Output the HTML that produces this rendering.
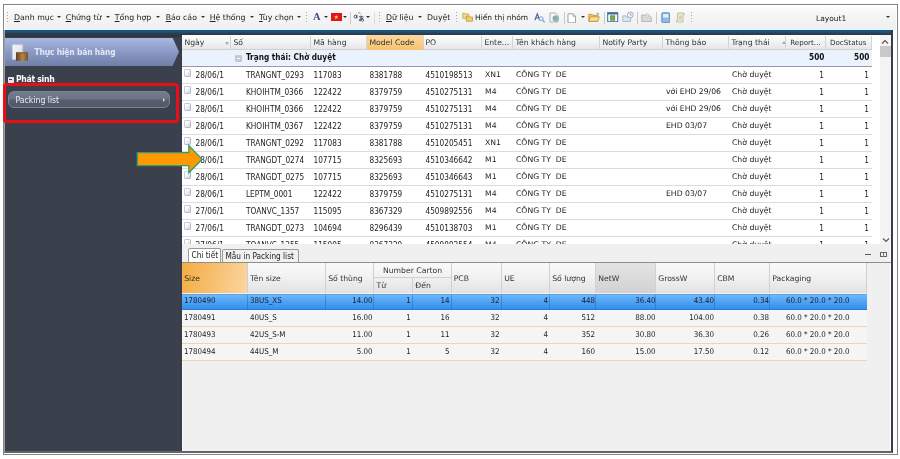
<!DOCTYPE html>
<html lang="vi">
<head>
<meta charset="utf-8">
<title>Packing list</title>
<style>
html,body{margin:0;padding:0;background:#fff;}
body{width:900px;height:459px;position:relative;overflow:hidden;font-family:"DejaVu Sans Condensed","DejaVu Sans","Liberation Sans",sans-serif;font-size:8.2px;color:#2a2a2a;}
div{position:absolute;box-sizing:border-box;}
#wrap{left:0;top:0;width:900px;height:459px;will-change:transform;}
.t{white-space:nowrap;line-height:10px;height:10px;font-size:8.2px;color:#222;}
.t.r{text-align:right;}
.t.b{font-weight:bold;color:#111;}
.t.h,.t.w{font-family:"DejaVu Sans","Liberation Sans",sans-serif;font-size:7.7px;}
.t.h{color:#333;}
.t.sel{color:#161c33;}
#grid2 .t{font-size:7.9px;}
#grid2 .t.h{font-size:7.7px;}
/* frame */
#frame{left:3px;top:4px;width:895px;height:451px;border:1.5px solid #848484;background:#fff;}
#toolbar{left:5px;top:6px;width:891px;height:23.5px;background:linear-gradient(#fdfdfd,#f5f5f5 40%,#f1f1f1 86%,#e3f4fa 96%);}
#band{left:5px;top:29.5px;width:887px;height:8.5px;background:linear-gradient(#1b5884 0,#1c4f76 28%,#2b3e52 42%,#2f3742 65%,#2f3540 100%);}
#main{left:4px;top:30px;width:889px;height:423px;border-left:1px solid #9aa0aa;border-right:2px solid #3a3c4c;border-bottom:2px solid #62646e;}
#side{left:5px;top:37px;width:177px;height:414px;background:#3a404c;}
#content{left:182px;top:35px;width:708.300px;height:416px;background:#f0f0f0;}
#gridbg{left:182px;top:35px;width:708.300px;height:209.3px;background:#fff;}
/* toolbar */
.mi{font-family:"DejaVu Sans","Liberation Sans",sans-serif;font-size:7.8px;color:#222;top:13.2px;line-height:10px;white-space:nowrap;}
.mi u{text-decoration:underline;}
.dd{width:0;height:0;border-left:2px solid transparent;border-right:2px solid transparent;border-top:2.5px solid #333;top:16px;}
.grip{width:1px;height:12px;top:12px;background:repeating-linear-gradient(#aaa 0,#aaa 1px,transparent 1px,transparent 3px);}
.tsep{width:1px;height:12px;top:12px;background:#c9c9c9;}
/* sidebar */
#shead{left:5px;top:37.5px;width:174px;height:28.5px;background:linear-gradient(#a9b9e1,#8c9cc8 45%,#6f7fa7);clip-path:polygon(0 0,167.500px 0,174px 50%,167.500px 100%,0 100%);}
#pbtn{left:7.8px;top:91.2px;width:162px;height:16.8px;border-radius:6px;border:1px solid #7d8494;background:linear-gradient(#737b8e,#6a7286 49%,#565e6f 51%,#50586a);}
#redbox{left:2.5px;top:82.7px;width:176.2px;height:39.9px;border:3.5px solid #ea0f17;border-radius:3.5px;}
/* grid 1 */
.gh{background:linear-gradient(#fdfdfd,#f3f3f3 50%,#e6e6e6);border-bottom:1px solid #d0d0d0;}
.ghsel{background:linear-gradient(#fbd9a0,#f8c26f);}
.vsep{width:1px;background:#d4d4d4;}
.grp{background:#eaf3fd;}
.hline{height:1px;background:#dcdcdc;}
.hline.dark{background:#9a9a9a;}
.cb{width:7px;height:8px;border:1px solid #b3b8c8;border-top-color:#c6cad6;border-left-color:#c6cad6;border-radius:1.8px;background:linear-gradient(135deg,#fff 25%,#d0d4e1);}
.minus{width:6.5px;height:6.5px;border-radius:1.2px;background:#c6cad0;}
.minus:after{content:"";position:absolute;left:1.5px;top:2.6px;width:3.5px;height:1.2px;background:#fff;}
.sortd{width:0;height:0;border-left:2.5px solid transparent;border-right:2.5px solid transparent;border-top:3px solid #aaa;}
.sortu{width:0;height:0;border-left:2.5px solid transparent;border-right:2.5px solid transparent;border-bottom:3px solid #aaa;}
/* scrollbar */
#sb{left:880px;top:35px;width:10.5px;height:209.3px;background:#f4f4f4;}
#sbthumb{left:880px;top:46.3px;width:10.5px;height:10.3px;background:#c9c9c9;}
/* tabs */
.tab{border:1px solid #9a9a9a;border-bottom:none;border-radius:2px 2px 0 0;background:#f0f0f0;}
.tab.act{background:#fff;}
/* grid 2 */
.bh{background:linear-gradient(#fafafa,#f1f1f1 50%,#e2e2e2);}
.bhsel{background:linear-gradient(102deg,#f6ad42,#f7c070 50%,#fad7a2);}
.bhnet{background:linear-gradient(#e4e4e4,#d2d2d2);}
.vsep2{width:1px;background:#d0d0d0;}
.hsep2{height:1px;background:#d0d0d0;}
.selrow{background:linear-gradient(#6fb7fa,#50a4f4 45%,#3390ec);border-top:1px solid #5aa2e6;border-bottom:1px solid #2c7ad2;}
.selsep{width:1px;background:rgba(35,95,175,0.45);}
.brow{background:#f5f5f5;border-bottom:1.1px solid #f4d3a6;}
</style>
</head>
<body>
<div id="wrap">
<div id="frame"></div>
<div id="toolbar"></div>
<div id="band"></div>
<div id="side"></div>
<div id="content"></div>
<div style="left:180.200px;top:36px;width:1.800px;height:415px;background:#3b3b50"></div>
<div style="left:182px;top:244px;width:1.200px;height:207px;background:#fafafa"></div>
<div id="gridbg"></div>
<div id="main"></div>

<!-- toolbar items -->
<div class="grip" style="left:7px"></div>
<div class="mi" style="left:14px"><u>D</u>anh mục</div><div class="dd" style="left:57px"></div>
<div class="mi" style="left:65.700px"><u>C</u>hứng từ</div><div class="dd" style="left:105.700px"></div>
<div class="mi" style="left:114.700px"><u>T</u>ổng hợp</div><div class="dd" style="left:156.300px"></div>
<div class="mi" style="left:165.700px"><u>B</u>áo cáo</div><div class="dd" style="left:201px"></div>
<div class="mi" style="left:209.700px"><u>H</u>ệ thống</div><div class="dd" style="left:249.700px"></div>
<div class="mi" style="left:259px"><u>T</u>ùy chọn</div><div class="dd" style="left:297px"></div>
<div class="grip" style="left:306px"></div>
<div class="mi" style="left:313px;font-family:'Liberation Serif',serif;font-weight:bold;font-size:10.5px;color:#3a4a82;top:12.2px">A</div><div class="dd" style="left:324px"></div>
<div style="left:331px;top:13.3px;width:10.500px;height:7.500px;background:#e0161f"></div>
<div class="mi" style="left:333.800px;top:12.1px;font-size:5.5px;color:#ffe44a">★</div>
<div class="dd" style="left:342.500px"></div>
<div class="tsep" style="left:350px"></div>
<svg style="position:absolute;left:353px;top:11px" width="12" height="12" viewBox="0 0 12 12"><path d="M5 2.300Q6.500 0.800 7.600 2.600" fill="none" stroke="#4a8fd8" stroke-width="0.9"/><ellipse cx="2.500" cy="5.600" rx="1.300" ry="1.500" fill="none" stroke="#34405a" stroke-width="0.9"/><path d="M3.900 3.900V7.300" stroke="#34405a" stroke-width="0.9"/><path d="M6 5.800H10.500M8 4.600V10.200M9.800 6.800Q9.600 9.400 6.800 10Q5.200 9.400 7.400 7.800Q10.400 6.800 10.600 9.200Q10.400 10.400 9.400 10.600" fill="none" stroke="#34405a" stroke-width="0.85"/></svg>
<div class="dd" style="left:365.500px"></div>
<div class="tsep" style="left:373.500px;background:#dcdcdc"></div><div class="grip" style="left:378.500px"></div>
<div class="mi" style="left:386px"><u>D</u>ữ liệu</div><div class="dd" style="left:418px"></div>
<div class="mi" style="left:427px">Duyệt</div>
<div class="grip" style="left:456px"></div>
<!-- icons -->
<svg style="position:absolute;left:461.500px;top:11.5px" width="11.5" height="10" viewBox="0 0 11.5 10"><path d="M0.800 1.300h2.400l0.700 0.800h2.800v4.200h-5.900z" fill="#f3d987" stroke="#b99a45" stroke-width="0.7"/><path d="M4.300 4.200h2.400l0.700 0.800h3.200v4.200h-6.300z" fill="#f0cf6a" stroke="#b08d35" stroke-width="0.7"/></svg>
<div class="mi" style="left:475px;font-size:7.5px">Hiển thị nhóm</div>
<svg style="position:absolute;left:533.500px;top:11.5px" width="12" height="12" viewBox="0 0 12 12"><path d="M0.800 8.200L3.300 1.800L5.800 8.200M1.700 6h3.200" fill="none" stroke="#3f5fa0" stroke-width="1.05"/><circle cx="7.200" cy="6.600" r="1.900" fill="#eaf2fb" stroke="#6f95cc" stroke-width="0.9"/><line x1="8.600" y1="8.100" x2="10.600" y2="10.300" stroke="#6f95cc" stroke-width="1.2"/></svg>
<svg style="position:absolute;left:549px;top:11.5px" width="11" height="11" viewBox="0 0 11 11"><path d="M1 1h5.500l2.500 2.500v6.500h-8z" fill="#f7f8fa" stroke="#9aa0aa" stroke-width="0.8"/><circle cx="6.600" cy="6.400" r="2.700" fill="#9fc0d8" stroke="#6d8aa5" stroke-width="0.7"/><path d="M5.200 5.200q1.400-1 2.600 0.300q-0.300 1.600-1.600 2.300q-1.300-1-1-2.600z" fill="#6fae5c"/></svg>
<div class="tsep" style="left:563.500px"></div>
<svg style="position:absolute;left:567.300px;top:12.5px" width="9.500" height="10.500" viewBox="0 0 9.500 10.500"><path d="M1 0.800h5l2.500 2.500v6.500h-7.500z" fill="#fff" stroke="#8d939e" stroke-width="0.85"/><path d="M6 0.800v2.500h2.500" fill="none" stroke="#8d939e" stroke-width="0.7"/></svg>
<div class="dd" style="left:581.300px"></div>
<svg style="position:absolute;left:588px;top:11.5px" width="12" height="10.500" viewBox="0 0 12 10.500"><path d="M0.800 2.300h3.400l0.900 1h4.700v6h-9z" fill="#eec65a" stroke="#b18a2a" stroke-width="0.7"/><path d="M2.300 4.800h9l-1.600 4.500h-8.900z" fill="#f9e08e" stroke="#b18a2a" stroke-width="0.7"/><path d="M8.500 1.200l2 0.400-0.600 1.800" fill="none" stroke="#5f86c4" stroke-width="0.8"/></svg>
<div class="tsep" style="left:604px"></div>
<svg style="position:absolute;left:607px;top:11.7px" width="11.500" height="10.500" viewBox="0 0 11.500 10.500"><rect x="0.700" y="0.700" width="10" height="9" fill="#fbfcfd" stroke="#3f6da3" stroke-width="1"/><rect x="0.700" y="0.700" width="10" height="1.800" fill="#3f6da3"/><rect x="3.600" y="3.800" width="4.200" height="4.400" fill="#74b04c" stroke="#467a2c" stroke-width="0.6"/></svg>
<svg style="position:absolute;left:621.800px;top:11.2px" width="12.500" height="11.500" viewBox="0 0 12.500 11.500"><path d="M0.800 4.800h3l0.800 0.900h4v4.800h-7.800z" fill="#d9e4f0" stroke="#94a8c0" stroke-width="0.7"/><circle cx="8.300" cy="3.900" r="2.900" fill="#f6f9fc" stroke="#8a9bb2" stroke-width="0.8"/><path d="M8.300 2.200v1.800h1.500" fill="none" stroke="#6d7f98" stroke-width="0.7"/></svg>
<div class="tsep" style="left:637px"></div>
<svg style="position:absolute;left:640.800px;top:12px" width="11.500" height="10.500" viewBox="0 0 11.500 10.500"><path d="M0.800 3h6.800l2.700 2.400v4.100h-9.500z" fill="#dadada" stroke="#a9a9a9" stroke-width="0.8"/><path d="M5.500 1.200l2.700 2.200-2 2.400" fill="#ececec" stroke="#b4b4b4" stroke-width="0.7"/></svg>
<div class="tsep" style="left:656px"></div>
<svg style="position:absolute;left:660.500px;top:11.8px" width="9.500" height="11.500" viewBox="0 0 9.500 11.500"><rect x="0.800" y="0.800" width="7.900" height="9.900" rx="0.900" fill="#8fb9e4" stroke="#5b86b8" stroke-width="0.9"/><rect x="2.100" y="2.100" width="5.300" height="3.400" fill="#e4f0fb"/></svg>
<svg style="position:absolute;left:675px;top:11.800px" width="10.500" height="11" viewBox="0 0 10.500 11"><path d="M2.600 1h6.300q0.900 0.900 0 1.800h-0.900v7.200h-6.300q-0.900-0.900 0-1.800h0.900z" fill="#efe9d2" stroke="#b3aa8c" stroke-width="0.7"/><path d="M4.200 3.500h2.300v4.200h-2.300z" fill="#d8cfa8"/></svg>
<div class="grip" style="left:691px"></div>
<div class="mi" style="left:816px;font-size:7.5px;top:13.6px">Layout1</div>
<div class="dd" style="left:886px"></div>

<!-- sidebar -->
<div id="shead"></div>
<svg style="position:absolute;left:10px;top:42px" width="20" height="22" viewBox="0 0 20 22"><defs><linearGradient id="pg" x1="0" y1="0" x2="1" y2="1"><stop offset="0" stop-color="#ffffff"/><stop offset="1" stop-color="#cfd3de"/></linearGradient><linearGradient id="bg" x1="0" y1="0" x2="1" y2="0"><stop offset="0" stop-color="#5e3f1a"/><stop offset="0.55" stop-color="#b5854a"/><stop offset="1" stop-color="#7a5226"/></linearGradient></defs><path d="M2.300 2.700h10.400v14.800h-10.400z" fill="url(#pg)" stroke="#c3c7d3" stroke-width="1"/><path d="M4 4.500h7v2.500h-7z" fill="#e9ebf1"/><path d="M6 10.200h12v8.600h-12z" fill="url(#bg)"/><path d="M6 10.200h12v1.500h-12z" fill="#8a6230" opacity="0.7"/></svg>
<div class="t" style="left:34.500px;top:47px;font-weight:bold;font-size:8.4px;letter-spacing:-0.15px;color:#e3e7f2">Thực hiện bán hàng</div>
<div style="left:8px;top:77px;width:5.500px;height:5.500px;background:#e4e6ec;border-radius:0.8px"></div><div style="left:9.200px;top:79.2px;width:3.100px;height:1.1px;background:#3a404c"></div>
<div class="t" style="left:16px;top:73.9px;font-weight:bold;font-size:8.6px;letter-spacing:-0.3px;color:#fff">Phát sinh</div>
<div id="pbtn"></div>
<div class="t" style="left:15.600px;top:94.7px;color:#eceef3;font-size:8.6px">Packing list</div>
<div style="left:162.800px;top:97.5px;width:0;height:0;border-top:2px solid transparent;border-bottom:2px solid transparent;border-left:2.7px solid #f0d98c"></div>
<div id="redbox"></div>

<div id="grid1">
<div class="gh" style="left:182px;top:35px;width:690px;height:15px"></div>
<div class="ghsel" style="left:367px;top:35px;width:57px;height:15px"></div>
<div class="t h" style="left:184.4px;top:37.5px;">Ngày</div>
<div class="t h" style="left:233.4px;top:37.5px;">Số</div>
<div class="vsep" style="left:230px;top:36px;height:13px"></div>
<div class="t h" style="left:313.4px;top:37.5px;">Mã hàng</div>
<div class="vsep" style="left:310px;top:36px;height:13px"></div>
<div class="t h" style="left:369.4px;top:37.5px;">Model Code</div>
<div class="vsep" style="left:366px;top:36px;height:13px"></div>
<div class="t h" style="left:425.4px;top:37.5px;">PO</div>
<div class="vsep" style="left:422px;top:36px;height:13px"></div>
<div class="t h" style="left:484.4px;top:37.5px;">Ente...</div>
<div class="vsep" style="left:481px;top:36px;height:13px"></div>
<div class="t h" style="left:515.4px;top:37.5px;">Tên khách hàng</div>
<div class="vsep" style="left:512px;top:36px;height:13px"></div>
<div class="t h" style="left:602.4px;top:37.5px;">Notify Party</div>
<div class="vsep" style="left:599px;top:36px;height:13px"></div>
<div class="t h" style="left:665.4px;top:37.5px;">Thông báo</div>
<div class="vsep" style="left:662px;top:36px;height:13px"></div>
<div class="t h" style="left:731.4px;top:37.5px;">Trạng thái</div>
<div class="vsep" style="left:728px;top:36px;height:13px"></div>
<div class="t h" style="left:790.2px;top:37.5px;font-size:7.15px">Report...</div>
<div class="vsep" style="left:785px;top:36px;height:13px"></div>
<div class="t h" style="left:830px;top:37.5px;font-size:7.15px">DocStatus</div>
<div class="vsep" style="left:825px;top:36px;height:13px"></div>
<div class="vsep" style="left:871px;top:36px;height:13px"></div>
<div class="sortd" style="left:225px;top:42px"></div>
<div class="sortu" style="left:782px;top:41px"></div>
<div class="grp" style="left:182px;top:50px;width:690px;height:16px"></div>
<div class="minus" style="left:235px;top:55px"></div>
<div class="t b" style="left:246px;top:52px;">Trạng thái: Chờ duyệt</div>
<div class="t r b" style="left:724.5px;width:100px;top:52px;">500</div>
<div class="t r b" style="left:769.5px;width:100px;top:52px;">500</div>
<div class="hline dark" style="left:182px;top:66.2px;width:690px"></div>
<div class="cb" style="left:184.3px;top:69.20px"></div>
<div class="t " style="left:195.5px;top:70.0px;">28/06/1</div>
<div class="t " style="left:246px;top:70.0px;">TRANGNT_0293</div>
<div class="t " style="left:313.5px;top:70.0px;">117083</div>
<div class="t " style="left:369.5px;top:70.0px;">8381788</div>
<div class="t " style="left:425.5px;top:70.0px;">4510198513</div>
<div class="t w" style="left:485px;top:70.0px;">XN1</div>
<div class="t w" style="left:516px;top:70.0px;white-space:pre">CÔNG TY  DE</div>
<div class="t w" style="left:666px;top:70.0px;"></div>
<div class="t w" style="left:732px;top:70.0px;">Chờ duyệt</div>
<div class="t r " style="left:724px;width:100px;top:70.0px;">1</div>
<div class="t r " style="left:769px;width:100px;top:70.0px;">1</div>
<div class="hline" style="left:182px;top:83.26px;width:690px"></div>
<div class="cb" style="left:184.3px;top:86.16px"></div>
<div class="t " style="left:195.5px;top:86.96000000000001px;">28/06/1</div>
<div class="t " style="left:246px;top:86.96000000000001px;">KHOIHTM_0366</div>
<div class="t " style="left:313.5px;top:86.96000000000001px;">122422</div>
<div class="t " style="left:369.5px;top:86.96000000000001px;">8379759</div>
<div class="t " style="left:425.5px;top:86.96000000000001px;">4510275131</div>
<div class="t w" style="left:485px;top:86.96000000000001px;">M4</div>
<div class="t w" style="left:516px;top:86.96000000000001px;white-space:pre">CÔNG TY  DE</div>
<div class="t w" style="left:666px;top:86.96000000000001px;">với EHD 29/06</div>
<div class="t w" style="left:732px;top:86.96000000000001px;">Chờ duyệt</div>
<div class="t r " style="left:724px;width:100px;top:86.96000000000001px;">1</div>
<div class="t r " style="left:769px;width:100px;top:86.96000000000001px;">1</div>
<div class="hline" style="left:182px;top:100.22px;width:690px"></div>
<div class="cb" style="left:184.3px;top:103.12px"></div>
<div class="t " style="left:195.5px;top:103.92px;">28/06/1</div>
<div class="t " style="left:246px;top:103.92px;">KHOIHTM_0366</div>
<div class="t " style="left:313.5px;top:103.92px;">122422</div>
<div class="t " style="left:369.5px;top:103.92px;">8379759</div>
<div class="t " style="left:425.5px;top:103.92px;">4510275131</div>
<div class="t w" style="left:485px;top:103.92px;">M4</div>
<div class="t w" style="left:516px;top:103.92px;white-space:pre">CÔNG TY  DE</div>
<div class="t w" style="left:666px;top:103.92px;">với EHD 29/06</div>
<div class="t w" style="left:732px;top:103.92px;">Chờ duyệt</div>
<div class="t r " style="left:724px;width:100px;top:103.92px;">1</div>
<div class="t r " style="left:769px;width:100px;top:103.92px;">1</div>
<div class="hline" style="left:182px;top:117.18px;width:690px"></div>
<div class="cb" style="left:184.3px;top:120.08px"></div>
<div class="t " style="left:195.5px;top:120.88px;">28/06/1</div>
<div class="t " style="left:246px;top:120.88px;">KHOIHTM_0367</div>
<div class="t " style="left:313.5px;top:120.88px;">122422</div>
<div class="t " style="left:369.5px;top:120.88px;">8379759</div>
<div class="t " style="left:425.5px;top:120.88px;">4510275131</div>
<div class="t w" style="left:485px;top:120.88px;">M4</div>
<div class="t w" style="left:516px;top:120.88px;white-space:pre">CÔNG TY  DE</div>
<div class="t w" style="left:666px;top:120.88px;">EHD 03/07</div>
<div class="t w" style="left:732px;top:120.88px;">Chờ duyệt</div>
<div class="t r " style="left:724px;width:100px;top:120.88px;">1</div>
<div class="t r " style="left:769px;width:100px;top:120.88px;">1</div>
<div class="hline" style="left:182px;top:134.14px;width:690px"></div>
<div class="cb" style="left:184.3px;top:137.04px"></div>
<div class="t " style="left:195.5px;top:137.84px;">28/06/1</div>
<div class="t " style="left:246px;top:137.84px;">TRANGNT_0292</div>
<div class="t " style="left:313.5px;top:137.84px;">117083</div>
<div class="t " style="left:369.5px;top:137.84px;">8381788</div>
<div class="t " style="left:425.5px;top:137.84px;">4510205451</div>
<div class="t w" style="left:485px;top:137.84px;">XN1</div>
<div class="t w" style="left:516px;top:137.84px;white-space:pre">CÔNG TY  DE</div>
<div class="t w" style="left:666px;top:137.84px;"></div>
<div class="t w" style="left:732px;top:137.84px;">Chờ duyệt</div>
<div class="t r " style="left:724px;width:100px;top:137.84px;">1</div>
<div class="t r " style="left:769px;width:100px;top:137.84px;">1</div>
<div class="hline" style="left:182px;top:151.10px;width:690px"></div>
<div class="cb" style="left:184.3px;top:154.00px"></div>
<div class="t " style="left:195.5px;top:154.8px;">28/06/1</div>
<div class="t " style="left:246px;top:154.8px;">TRANGDT_0274</div>
<div class="t " style="left:313.5px;top:154.8px;">107715</div>
<div class="t " style="left:369.5px;top:154.8px;">8325693</div>
<div class="t " style="left:425.5px;top:154.8px;">4510346642</div>
<div class="t w" style="left:485px;top:154.8px;">M1</div>
<div class="t w" style="left:516px;top:154.8px;white-space:pre">CÔNG TY  DE</div>
<div class="t w" style="left:666px;top:154.8px;"></div>
<div class="t w" style="left:732px;top:154.8px;">Chờ duyệt</div>
<div class="t r " style="left:724px;width:100px;top:154.8px;">1</div>
<div class="t r " style="left:769px;width:100px;top:154.8px;">1</div>
<div class="hline" style="left:182px;top:168.06px;width:690px"></div>
<div class="cb" style="left:184.3px;top:170.96px"></div>
<div class="t " style="left:195.5px;top:171.76000000000002px;">28/06/1</div>
<div class="t " style="left:246px;top:171.76000000000002px;">TRANGDT_0275</div>
<div class="t " style="left:313.5px;top:171.76000000000002px;">107715</div>
<div class="t " style="left:369.5px;top:171.76000000000002px;">8325693</div>
<div class="t " style="left:425.5px;top:171.76000000000002px;">4510346643</div>
<div class="t w" style="left:485px;top:171.76000000000002px;">M1</div>
<div class="t w" style="left:516px;top:171.76000000000002px;white-space:pre">CÔNG TY  DE</div>
<div class="t w" style="left:666px;top:171.76000000000002px;"></div>
<div class="t w" style="left:732px;top:171.76000000000002px;">Chờ duyệt</div>
<div class="t r " style="left:724px;width:100px;top:171.76000000000002px;">1</div>
<div class="t r " style="left:769px;width:100px;top:171.76000000000002px;">1</div>
<div class="hline" style="left:182px;top:185.02px;width:690px"></div>
<div class="cb" style="left:184.3px;top:187.92px"></div>
<div class="t " style="left:195.5px;top:188.72px;">28/06/1</div>
<div class="t " style="left:246px;top:188.72px;">LEPTM_0001</div>
<div class="t " style="left:313.5px;top:188.72px;">122422</div>
<div class="t " style="left:369.5px;top:188.72px;">8379759</div>
<div class="t " style="left:425.5px;top:188.72px;">4510275131</div>
<div class="t w" style="left:485px;top:188.72px;">M4</div>
<div class="t w" style="left:516px;top:188.72px;white-space:pre">CÔNG TY  DE</div>
<div class="t w" style="left:666px;top:188.72px;">EHD 03/07</div>
<div class="t w" style="left:732px;top:188.72px;">Chờ duyệt</div>
<div class="t r " style="left:724px;width:100px;top:188.72px;">1</div>
<div class="t r " style="left:769px;width:100px;top:188.72px;">1</div>
<div class="hline" style="left:182px;top:201.98px;width:690px"></div>
<div class="cb" style="left:184.3px;top:204.88px"></div>
<div class="t " style="left:195.5px;top:205.68px;">27/06/1</div>
<div class="t " style="left:246px;top:205.68px;">TOANVC_1357</div>
<div class="t " style="left:313.5px;top:205.68px;">115095</div>
<div class="t " style="left:369.5px;top:205.68px;">8367329</div>
<div class="t " style="left:425.5px;top:205.68px;">4509892556</div>
<div class="t w" style="left:485px;top:205.68px;">M4</div>
<div class="t w" style="left:516px;top:205.68px;white-space:pre">CÔNG TY  DE</div>
<div class="t w" style="left:666px;top:205.68px;"></div>
<div class="t w" style="left:732px;top:205.68px;">Chờ duyệt</div>
<div class="t r " style="left:724px;width:100px;top:205.68px;">1</div>
<div class="t r " style="left:769px;width:100px;top:205.68px;">1</div>
<div class="hline" style="left:182px;top:218.94px;width:690px"></div>
<div class="cb" style="left:184.3px;top:221.84px"></div>
<div class="t " style="left:195.5px;top:222.64000000000001px;">27/06/1</div>
<div class="t " style="left:246px;top:222.64000000000001px;">TRANGDT_0273</div>
<div class="t " style="left:313.5px;top:222.64000000000001px;">104694</div>
<div class="t " style="left:369.5px;top:222.64000000000001px;">8296439</div>
<div class="t " style="left:425.5px;top:222.64000000000001px;">4510138703</div>
<div class="t w" style="left:485px;top:222.64000000000001px;">M1</div>
<div class="t w" style="left:516px;top:222.64000000000001px;white-space:pre">CÔNG TY  DE</div>
<div class="t w" style="left:666px;top:222.64000000000001px;"></div>
<div class="t w" style="left:732px;top:222.64000000000001px;">Chờ duyệt</div>
<div class="t r " style="left:724px;width:100px;top:222.64000000000001px;">1</div>
<div class="t r " style="left:769px;width:100px;top:222.64000000000001px;">1</div>
<div class="hline" style="left:182px;top:235.90px;width:690px"></div>
<div class="cb" style="left:184.3px;top:238.80px"></div>
<div class="t " style="left:195.5px;top:239.60000000000002px;">27/06/1</div>
<div class="t " style="left:246px;top:239.60000000000002px;">TOANVC_1355</div>
<div class="t " style="left:313.5px;top:239.60000000000002px;">115095</div>
<div class="t " style="left:369.5px;top:239.60000000000002px;">8367329</div>
<div class="t " style="left:425.5px;top:239.60000000000002px;">4509892554</div>
<div class="t w" style="left:485px;top:239.60000000000002px;">M4</div>
<div class="t w" style="left:516px;top:239.60000000000002px;white-space:pre">CÔNG TY  DE</div>
<div class="t w" style="left:666px;top:239.60000000000002px;"></div>
<div class="t w" style="left:732px;top:239.60000000000002px;">Chờ duyệt</div>
<div class="t r " style="left:724px;width:100px;top:239.60000000000002px;">1</div>
<div class="t r " style="left:769px;width:100px;top:239.60000000000002px;">1</div>
<div class="hline" style="left:182px;top:252.86px;width:690px"></div>
</div>
<div id="grid2">
<div class="bh" style="left:182px;top:262px;width:685px;height:31px"></div>
<div class="bhsel" style="left:182px;top:262px;width:66px;height:31px"></div>
<div class="bhnet" style="left:596px;top:262px;width:60px;height:31px"></div>
<div class="vsep2" style="left:247px;top:262px;height:31px"></div>
<div class="vsep2" style="left:325px;top:262px;height:31px"></div>
<div class="vsep2" style="left:373px;top:262px;height:31px"></div>
<div class="vsep2" style="left:450.5px;top:262px;height:31px"></div>
<div class="vsep2" style="left:501px;top:262px;height:31px"></div>
<div class="vsep2" style="left:549px;top:262px;height:31px"></div>
<div class="vsep2" style="left:595px;top:262px;height:31px"></div>
<div class="vsep2" style="left:655px;top:262px;height:31px"></div>
<div class="vsep2" style="left:714px;top:262px;height:31px"></div>
<div class="vsep2" style="left:769px;top:262px;height:31px"></div>
<div class="vsep2" style="left:866px;top:262px;height:31px"></div>
<div class="vsep2" style="left:412px;top:277px;height:16px"></div>
<div class="hsep2" style="left:374px;top:276.8px;width:77.5px"></div>
<div class="t h" style="left:184.2px;top:273.6px;">Size</div>
<div class="t h" style="left:250.2px;top:273.6px;">Tên size</div>
<div class="t h" style="left:328.2px;top:273.6px;">Số thùng</div>
<div class="t h" style="left:453.7px;top:273.6px;">PCB</div>
<div class="t h" style="left:504.2px;top:273.6px;">UE</div>
<div class="t h" style="left:552.2px;top:273.6px;">Số lượng</div>
<div class="t h" style="left:598.2px;top:273.6px;">NetW</div>
<div class="t h" style="left:658.2px;top:273.6px;">GrossW</div>
<div class="t h" style="left:717.2px;top:273.6px;">CBM</div>
<div class="t h" style="left:772.2px;top:273.6px;">Packaging</div>
<div class="t h" style="left:383px;top:265.5px;">Number Carton</div>
<div class="t h" style="left:376.5px;top:281px;">Từ</div>
<div class="t h" style="left:415.3px;top:281px;">Đến</div>
<div class="selrow" style="left:182px;top:294.00px;width:685px;height:16.00px"></div>
<div class="selsep" style="left:247px;top:294.50px;height:15.00px"></div>
<div class="selsep" style="left:325px;top:294.50px;height:15.00px"></div>
<div class="selsep" style="left:373px;top:294.50px;height:15.00px"></div>
<div class="selsep" style="left:412px;top:294.50px;height:15.00px"></div>
<div class="selsep" style="left:450.5px;top:294.50px;height:15.00px"></div>
<div class="selsep" style="left:501px;top:294.50px;height:15.00px"></div>
<div class="selsep" style="left:549px;top:294.50px;height:15.00px"></div>
<div class="selsep" style="left:595px;top:294.50px;height:15.00px"></div>
<div class="selsep" style="left:655px;top:294.50px;height:15.00px"></div>
<div class="selsep" style="left:714px;top:294.50px;height:15.00px"></div>
<div class="selsep" style="left:769px;top:294.50px;height:15.00px"></div>
<div class="t sel" style="left:184px;top:296.40000000000003px;">1780490</div>
<div class="t sel" style="left:250px;top:296.40000000000003px;">38US_XS</div>
<div class="t r sel" style="left:272.5px;width:100px;top:296.40000000000003px;">14.00</div>
<div class="t r sel" style="left:310.8px;width:100px;top:296.40000000000003px;">1</div>
<div class="t r sel" style="left:349.5px;width:100px;top:296.40000000000003px;">14</div>
<div class="t r sel" style="left:399.6px;width:100px;top:296.40000000000003px;">32</div>
<div class="t r sel" style="left:448px;width:100px;top:296.40000000000003px;">4</div>
<div class="t r sel" style="left:495px;width:100px;top:296.40000000000003px;">448</div>
<div class="t r sel" style="left:555.5px;width:100px;top:296.40000000000003px;">36.40</div>
<div class="t r sel" style="left:614px;width:100px;top:296.40000000000003px;">43.40</div>
<div class="t r sel" style="left:669px;width:100px;top:296.40000000000003px;">0.34</div>
<div class="t sel" style="left:786px;top:296.40000000000003px;">60.0 * 20.0 * 20.0</div>
<div class="brow" style="left:182px;top:310.0px;width:685px;height:16.9px"></div>
<div class="t " style="left:184px;top:313.3px;">1780491</div>
<div class="t " style="left:250px;top:313.3px;">40US_S</div>
<div class="t r " style="left:272.5px;width:100px;top:313.3px;">16.00</div>
<div class="t r " style="left:310.8px;width:100px;top:313.3px;">1</div>
<div class="t r " style="left:349.5px;width:100px;top:313.3px;">16</div>
<div class="t r " style="left:399.6px;width:100px;top:313.3px;">32</div>
<div class="t r " style="left:448px;width:100px;top:313.3px;">4</div>
<div class="t r " style="left:495px;width:100px;top:313.3px;">512</div>
<div class="t r " style="left:555.5px;width:100px;top:313.3px;">88.00</div>
<div class="t r " style="left:614px;width:100px;top:313.3px;">104.00</div>
<div class="t r " style="left:669px;width:100px;top:313.3px;">0.38</div>
<div class="t " style="left:786px;top:313.3px;">60.0 * 20.0 * 20.0</div>
<div class="brow" style="left:182px;top:326.90000000000003px;width:685px;height:16.9px"></div>
<div class="t " style="left:184px;top:330.20000000000005px;">1780493</div>
<div class="t " style="left:250px;top:330.20000000000005px;">42US_S-M</div>
<div class="t r " style="left:272.5px;width:100px;top:330.20000000000005px;">11.00</div>
<div class="t r " style="left:310.8px;width:100px;top:330.20000000000005px;">1</div>
<div class="t r " style="left:349.5px;width:100px;top:330.20000000000005px;">11</div>
<div class="t r " style="left:399.6px;width:100px;top:330.20000000000005px;">32</div>
<div class="t r " style="left:448px;width:100px;top:330.20000000000005px;">4</div>
<div class="t r " style="left:495px;width:100px;top:330.20000000000005px;">352</div>
<div class="t r " style="left:555.5px;width:100px;top:330.20000000000005px;">30.80</div>
<div class="t r " style="left:614px;width:100px;top:330.20000000000005px;">36.30</div>
<div class="t r " style="left:669px;width:100px;top:330.20000000000005px;">0.26</div>
<div class="t " style="left:786px;top:330.20000000000005px;">60.0 * 20.0 * 20.0</div>
<div class="brow" style="left:182px;top:343.8px;width:685px;height:16.9px"></div>
<div class="t " style="left:184px;top:347.1px;">1780494</div>
<div class="t " style="left:250px;top:347.1px;">44US_M</div>
<div class="t r " style="left:272.5px;width:100px;top:347.1px;">5.00</div>
<div class="t r " style="left:310.8px;width:100px;top:347.1px;">1</div>
<div class="t r " style="left:349.5px;width:100px;top:347.1px;">5</div>
<div class="t r " style="left:399.6px;width:100px;top:347.1px;">32</div>
<div class="t r " style="left:448px;width:100px;top:347.1px;">4</div>
<div class="t r " style="left:495px;width:100px;top:347.1px;">160</div>
<div class="t r " style="left:555.5px;width:100px;top:347.1px;">15.00</div>
<div class="t r " style="left:614px;width:100px;top:347.1px;">17.50</div>
<div class="t r " style="left:669px;width:100px;top:347.1px;">0.12</div>
<div class="t " style="left:786px;top:347.1px;">60.0 * 20.0 * 20.0</div>
</div>

<!-- scrollbar -->
<div id="sb"></div>
<div id="sbthumb"></div>
<svg style="position:absolute;left:881px;top:38.5px" width="8" height="6" viewBox="0 0 8 6"><path d="M1 4.5l3-3 3 3" fill="none" stroke="#555" stroke-width="1.1"/></svg>
<svg style="position:absolute;left:881.5px;top:236.5px" width="8" height="6" viewBox="0 0 8 6"><path d="M1 1.5l3 3 3-3" fill="none" stroke="#555" stroke-width="1.1"/></svg>

<!-- tabs -->
<div id="tabstrip" style="left:182px;top:244.4px;width:708.300px;height:17.6px;background:#f0f0f0"></div>
<div class="tab" style="left:221.500px;top:249px;width:77.200px;height:13px"></div>
<div class="tab act" style="left:188px;top:247.5px;width:33px;height:15px"></div>
<div class="t" style="left:191.500px;top:250px;color:#222">Chi tiết</div>
<div class="t" style="left:225.500px;top:250.5px;color:#222">Mẫu in Packing list</div>
<div style="left:865px;top:254px;width:6px;height:1.2px;background:#555"></div>
<div style="left:880.3px;top:251.8px;width:6.4px;height:5.2px;border:1px solid #666"></div><div style="left:883px;top:252px;width:1px;height:5px;background:#777"></div>

<div style="left:182px;top:261.7px;width:709px;height:1px;background:#8e8e8e"></div>
<!-- arrow annotation -->
<svg style="position:absolute;left:134px;top:142px" width="74" height="36" viewBox="0 0 74 36"><path d="M3.300 10.700H54.800V3.600L68.200 17.200L54.800 30.800V23.700H3.300Z" fill="#ff9900" stroke="#2f9d7a" stroke-width="1.3" stroke-linejoin="miter"/></svg>
</div>
</body>
</html>
